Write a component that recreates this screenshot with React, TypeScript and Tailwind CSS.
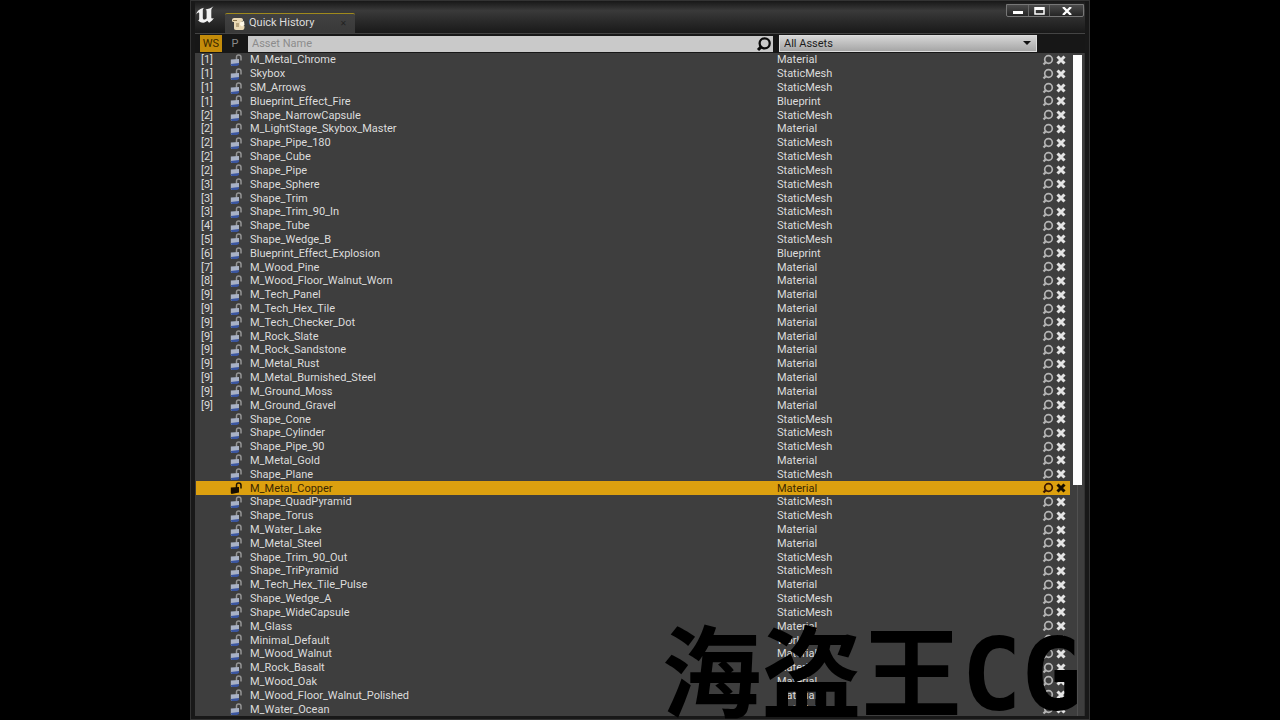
type Asset = { slot?: number; name: string; type: string };

const MAT = 'Material';
const MESH = 'StaticMesh';
const BP = 'Blueprint';

const ASSETS: Asset[] = [
  { slot: 1, name: 'M_Metal_Chrome', type: MAT },
  { slot: 1, name: 'Skybox', type: MESH },
  { slot: 1, name: 'SM_Arrows', type: MESH },
  { slot: 1, name: 'Blueprint_Effect_Fire', type: BP },
  { slot: 2, name: 'Shape_NarrowCapsule', type: MESH },
  { slot: 2, name: 'M_LightStage_Skybox_Master', type: MAT },
  { slot: 2, name: 'Shape_Pipe_180', type: MESH },
  { slot: 2, name: 'Shape_Cube', type: MESH },
  { slot: 2, name: 'Shape_Pipe', type: MESH },
  { slot: 3, name: 'Shape_Sphere', type: MESH },
  { slot: 3, name: 'Shape_Trim', type: MESH },
  { slot: 3, name: 'Shape_Trim_90_In', type: MESH },
  { slot: 4, name: 'Shape_Tube', type: MESH },
  { slot: 5, name: 'Shape_Wedge_B', type: MESH },
  { slot: 6, name: 'Blueprint_Effect_Explosion', type: BP },
  { slot: 7, name: 'M_Wood_Pine', type: MAT },
  { slot: 8, name: 'M_Wood_Floor_Walnut_Worn', type: MAT },
  { slot: 9, name: 'M_Tech_Panel', type: MAT },
  { slot: 9, name: 'M_Tech_Hex_Tile', type: MAT },
  { slot: 9, name: 'M_Tech_Checker_Dot', type: MAT },
  { slot: 9, name: 'M_Rock_Slate', type: MAT },
  { slot: 9, name: 'M_Rock_Sandstone', type: MAT },
  { slot: 9, name: 'M_Metal_Rust', type: MAT },
  { slot: 9, name: 'M_Metal_Burnished_Steel', type: MAT },
  { slot: 9, name: 'M_Ground_Moss', type: MAT },
  { slot: 9, name: 'M_Ground_Gravel', type: MAT },
  { name: 'Shape_Cone', type: MESH },
  { name: 'Shape_Cylinder', type: MESH },
  { name: 'Shape_Pipe_90', type: MESH },
  { name: 'M_Metal_Gold', type: MAT },
  { name: 'Shape_Plane', type: MESH },
  { name: 'M_Metal_Copper', type: MAT },
  { name: 'Shape_QuadPyramid', type: MESH },
  { name: 'Shape_Torus', type: MESH },
  { name: 'M_Water_Lake', type: MAT },
  { name: 'M_Metal_Steel', type: MAT },
  { name: 'Shape_Trim_90_Out', type: MESH },
  { name: 'Shape_TriPyramid', type: MESH },
  { name: 'M_Tech_Hex_Tile_Pulse', type: MAT },
  { name: 'Shape_Wedge_A', type: MESH },
  { name: 'Shape_WideCapsule', type: MESH },
  { name: 'M_Glass', type: MAT },
  { name: 'Minimal_Default', type: 'World' },
  { name: 'M_Wood_Walnut', type: MAT },
  { name: 'M_Rock_Basalt', type: MAT },
  { name: 'M_Wood_Oak', type: MAT },
  { name: 'M_Wood_Floor_Walnut_Polished', type: MAT },
  { name: 'M_Water_Ocean', type: MAT },
];

const SELECTED = 'M_Metal_Copper';

function UnrealLogo() {
  return (
    <svg viewBox="0 0 20 18" className="h-[18px] w-5" fill="#f2f2f2" aria-hidden="true">
      <path d="M0 8.500C.8 5.200 3.500 2.800 8 1.800 7 2.800 6.800 3.600 6.800 5v6.800c0 1.300.7 1.900 1.700 1.800.9-.1 1.600-.7 2.100-1.300V5.600c0-1.200-.2-1.700-1.200-2.100C12.300 3.200 15 2.100 17.500.3c-1.600 1.700-2.200 2.700-2.200 4.200v7c0 1 .9 1.300 2.500.5-1 2.200-2.800 3.600-4.700 4.700l-1.900-1.900c-1 1.100-2.300 1.900-4 1.900-2.400 0-4.200-.9-5.400-2.600 1 .2 1.400-.4 1.400-1.500V7.200C3.200 6 2 6.200 0 8.500Z" />
    </svg>
  );
}

function ScrollIcon() {
  return (
    <svg viewBox="0 0 14 14" className="h-3.5 w-3.5" aria-hidden="true">
      <path d="M1 3c0-1.300 1-2 2-2h7c1.500 0 2 1 2 2s-.6 1.700-1.500 1.700V8H12c1.200 0 1.500 1 1.500 2.200 0 1.500-.8 2.800-2 2.800H5c-1.500 0-2-1-2-2V5H2C1.300 5 1 4 1 3Z" fill="#ead9b5" />
      <path d="M2 3.500h4M5 7h3M5 9h3" stroke="#8a744c" fill="none" />
      <path d="M9 5.500 13 4l.5 4-2.500 1.500L9 8Z" fill="#fff8e6" />
    </svg>
  );
}

function UnlockIcon({ selected }: { selected: boolean }) {
  return (
    <svg viewBox="0 0 12 12" className="block h-3 w-3" aria-hidden="true">
      <path d="M6.500 6V3.200C6.500 1.700 7.300 1 8.700 1s2.300.8 2.300 2.200V6.500" fill="none" stroke={selected ? '#1d1300' : '#969696'} strokeWidth="1.500" />
      <path d="M.8 5.500 9 5v5.500L1.500 12 .8 11Z" fill={selected ? '#160e00' : '#a9b2c6'} />
      {!selected && <path d="M.8 10 9 9v2l-2 1H1.500Z" fill="#3b56a0" />}
    </svg>
  );
}

// Magnifier with its handle at the lower left
function BrowseIcon({ color, className }: { color: string; className: string }) {
  return (
    <svg viewBox="0 0 12 12" className={className} fill="none" stroke={color} aria-hidden="true">
      <circle cx="6.500" cy="5.500" r="3.800" strokeWidth="1.700" />
      <path d="M4 8 1.500 10.500" strokeWidth="2.300" />
    </svg>
  );
}

function CrossIcon({ color }: { color: string }) {
  return (
    <svg viewBox="0 0 10 10" className="block h-2.5 w-2.5" aria-hidden="true">
      <path d="M1.500 1.500 8.500 8.500M8.500 1.500 1.500 8.500" stroke={color} strokeWidth="3" />
    </svg>
  );
}

function TitleBar() {
  return (
    <header className="flex h-8 shrink-0 justify-between bg-linear-to-b from-[#181818] via-[#3a3a3a] via-30% to-[#191919] pl-px">
      <div className="flex items-end gap-[9px]">
        <div className="self-start pt-[5px]">
          <UnrealLogo />
        </div>
        <div className="flex h-5 w-[130px] items-center gap-1 rounded-t-xs border-t border-[#a08a1c] bg-linear-to-b from-[#414141] to-[#393939] pl-1.5">
          <ScrollIcon />
          <span className="flex-1 text-[11px] text-[#dddddd]">Quick History</span>
          <button type="button" aria-label="Close tab" className="pr-2 text-[8px] text-[#222222]">
            ✕
          </button>
        </div>
      </div>
      <div className="mt-[3px] mr-px flex h-[13px] rounded-b-xs border border-[#777777] bg-linear-to-b from-[#4b4b4b] to-[#252525]">
        <button type="button" aria-label="Minimize" className="flex w-[22px] items-center justify-center border-r border-[#666666]">
          <svg viewBox="0 0 10 8" className="h-2 w-2.5">
            <rect x="0" y="4" width="10" height="3" fill="#fff" />
          </svg>
        </button>
        <button type="button" aria-label="Maximize" className="flex w-[21px] items-center justify-center border-r border-[#666666]">
          <svg viewBox="0 0 11 8" className="h-2 w-[11px]">
            <path d="M1 .5h9v6.500H1Z" fill="none" stroke="#fff" strokeWidth="1.500" />
            <rect x="1" y="0" width="9" height="3" fill="#fff" />
          </svg>
        </button>
        <button type="button" aria-label="Close" className="flex w-[33px] items-center justify-center">
          <svg viewBox="0 0 10 8" className="h-2 w-2.5">
            <path d="M1 0 9 8M9 0 1 8" stroke="#fff" strokeWidth="2.300" />
          </svg>
        </button>
      </div>
    </header>
  );
}

function Toolbar() {
  return (
    <div className="flex h-5 shrink-0 items-center border-t border-[#444444] bg-[#171717] pl-[5px]">
      <button type="button" className="h-[17px] w-[22px] bg-[#c48c0a] text-[11px] leading-[17px] text-[#3a2800]">
        WS
      </button>
      <button type="button" className="h-[17px] w-[26px] text-[11px] leading-[17px] text-[#8a8a8a]">
        P
      </button>
      <div className="flex h-4 flex-1 items-center bg-[#c9c9c9]">
        <input
          type="text"
          aria-label="Asset Name"
          placeholder="Asset Name"
          className="h-4 min-w-0 flex-1 px-1 pt-px text-[11px] outline-none placeholder:text-[#8c8c8c]"
        />
        <button type="button" aria-label="Search" className="pr-px">
          <BrowseIcon color="#0a0a0a" className="block h-4 w-4" />
        </button>
      </div>
      <div className="relative mr-12 ml-1.5 h-[17px] w-[258px]">
        <select
          aria-label="Asset type"
          className="block h-full w-full appearance-none border border-[#dddddd] bg-linear-to-b from-[#d6d6d6] to-[#a6a6a6] px-1 text-[11px] leading-[15px] text-[#1c1c1c]"
        >
          <option>All Assets</option>
        </select>
        <svg viewBox="0 0 8 4" className="pointer-events-none absolute top-1.5 right-1.5 h-1 w-2" aria-hidden="true">
          <path d="M0 0H8L4 4Z" fill="#111" />
        </svg>
      </div>
    </div>
  );
}

function AssetRow({ asset }: { asset: Asset }) {
  const selected = asset.name === SELECTED;

  return (
    <tr
      className={`flex min-h-0 flex-1 items-center pl-[5px] text-[11px] leading-[13px] ${
        selected ? 'bg-[#dca00f] text-[#3b2700]' : 'text-[#dcdcdc]'
      }`}
    >
      <td className="w-[29px]">{asset.slot ? `[${asset.slot}]` : ''}</td>
      <td className="w-5">
        <button type="button" aria-label={`Lock ${asset.name}`} className="block">
          <UnlockIcon selected={selected} />
        </button>
      </td>
      <td className="flex-1">{asset.name}</td>
      <td className="w-[265px]">{asset.type}</td>
      <td className="flex w-7 items-center gap-0.5">
        <button type="button" aria-label={`Find ${asset.name}`}>
          <BrowseIcon color={selected ? '#3a1600' : '#b4b4b4'} className="block h-3 w-3" />
        </button>
        <button type="button" aria-label={`Remove ${asset.name}`}>
          <CrossIcon color={selected ? '#160e00' : '#e4e4e4'} />
        </button>
      </td>
    </tr>
  );
}

export default function App() {
  return (
    <div className="relative flex h-screen justify-center overflow-hidden bg-black font-['Roboto',sans-serif]">
      <main className="flex w-full max-w-[900px] flex-col border-t-2 border-r-5 border-b-4 border-l-5 border-[#181818] outline-1 -outline-offset-1 outline-[#333333]">
        <div className="-mt-px flex min-h-0 flex-1 flex-col">
          <TitleBar />
          <Toolbar />
          <div className="flex min-h-0 flex-1 bg-[#3e3e3e] pl-px">
            <table className="flex min-w-0 flex-1 flex-col">
              <tbody className="flex min-h-0 flex-1 flex-col">
                {ASSETS.map((asset) => (
                  <AssetRow key={asset.name} asset={asset} />
                ))}
              </tbody>
            </table>
            <div className="flex w-[15px] flex-col items-center border-r border-[#333333] pt-0.5">
              <div className="h-[65%] w-[9px] bg-white" />
              <div className="w-px flex-1 bg-[#505050]" />
            </div>
          </div>
        </div>
      </main>

      {/* Channel watermark over the window's lower right corner */}
      <div className="pointer-events-none absolute right-[198px] bottom-0 flex items-baseline text-[100px] leading-[88px] font-bold whitespace-nowrap text-black">
        <span className="font-['Noto_Sans_CJK_SC',sans-serif]">海盗王</span>
        <span className="font-['DejaVu_Sans_Mono',monospace]">CG</span>
      </div>
    </div>
  );
}
